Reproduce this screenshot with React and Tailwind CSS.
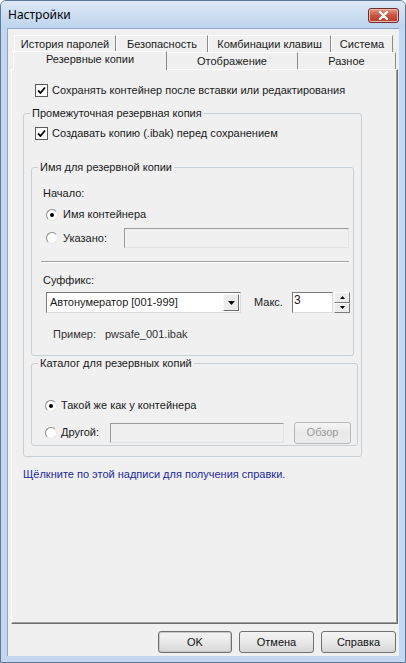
import React from 'react';

const font = "font-['Liberation_Sans',Arial,sans-serif]";

function Checkbox({ checked }) {
  return (
    <span className="flex items-center justify-center w-[13px] h-[13px] border border-[#5a5a5a] bg-white shrink-0">
      {checked && (
        <svg width="9" height="9" viewBox="0 0 9 9">
          <path d="M1 4.5 L3.5 7 L8 1.5" fill="none" stroke="#000" strokeWidth="1.8" />
        </svg>
      )}
    </span>
  );
}

function Radio({ checked }) {
  return (
    <span className="flex items-center justify-center w-[12px] h-[12px] rounded-full border border-[#8a8a8a] border-b-[#e8e8e8] border-r-[#e8e8e8] bg-white shrink-0">
      {checked && <span className="w-[4px] h-[4px] rounded-full bg-black" />}
    </span>
  );
}

function Group({ label, className, children }) {
  return (
    <fieldset className={'border border-[#c9d0d5] rounded-[3px] ' + className}>
      <legend className="ml-[6px] px-[2px] leading-[13px]">{label}</legend>
      {children}
    </fieldset>
  );
}

function Field({ className }) {
  return (
    <div className={'h-[20px] border border-[#9a9a9a] border-b-[#e3e3e3] border-r-[#e3e3e3] bg-[#f0f0f0] ' + className} />
  );
}

function Button({ children, isDefault, disabled, className }) {
  return (
    <button
      className={
        'h-[22px] rounded-[3px] border bg-linear-to-b from-[#f3f3f3] via-[#e9e9e9] to-[#d6d6d6] text-[11px] ' +
        (disabled ? 'border-[#b5b9bc] text-[#9a9a9a] from-[#f5f5f5] to-[#ececec] ' : 'border-[#707070] text-[#111] ') +
        (isDefault ? 'border-[#3d3d3d] shadow-[inset_0_0_0_1px_#c8c8c8] ' : '') +
        className
      }
    >
      {children}
    </button>
  );
}

const row1 = [
  ['История паролей', 'w-[102px]'],
  ['Безопасность', 'w-[92px]'],
  ['Комбинации клавиш', 'w-[123px]'],
  ['Система', 'w-[62px]'],
];

export default function App() {
  return (
    <div className={`w-[406px] h-[663px] flex flex-col bg-[#c3d7ee] border border-[#5d7a9c] rounded-t-[6px] overflow-hidden text-[11px] text-[#1a1a1a] ${font}`}>
      {/* title bar */}
      <div className="h-[27px] flex items-center justify-between pl-[7px] pr-[6px] bg-linear-to-b from-[#dbe7f5] to-[#bfd4ee]">
        <span className="font-['Noto_Sans',sans-serif] text-[12px] text-black">Настройки</span>
        <span className="flex items-center justify-center w-[31px] h-[15px] mt-[1px] rounded-[3px] border border-[#6e2b2b] bg-linear-to-b from-[#e39a8c] via-[#c9533f] to-[#b53a2a] shadow-[inset_0_0_0_1px_#f0b9ad]">
          <svg width="11" height="9" viewBox="0 0 11 9">
            <path d="M2 1 L9 8 M9 1 L2 8" stroke="#fff" strokeWidth="2.4" strokeLinecap="round" />
          </svg>
        </span>
      </div>

      {/* client area */}
      <div className="mx-[6px] flex-1 flex flex-col bg-[#f0f0f0] border-l border-t border-[#8ea7c4]">
        {/* tabs */}
        <div className="pt-[6px] pl-[6px] flex">
          {row1.map(([t, w]) => (
            <div key={t} className={'h-[17px] flex items-center justify-center border-l border-t border-white border-r border-r-[#8a8a8a] ' + w}>
              {t}
            </div>
          ))}
        </div>
        <div className="pl-[5px] flex items-end h-[17px]">
          <div className="h-[19px] w-[154px] flex items-center justify-center pb-[3px] border-l border-t border-white border-r border-r-[#8a8a8a] bg-[#f0f0f0] relative z-10 -mb-[1px]">
            Резервные копии
          </div>
          <div className="h-[17px] w-[131px] flex items-center justify-center border-t border-white border-r border-r-[#8a8a8a]">
            Отображение
          </div>
          <div className="h-[17px] w-[98px] flex items-center justify-center border-t border-white border-r border-r-[#8a8a8a]">
            Разное
          </div>
        </div>

        {/* panel */}
        <div className="ml-[3px] w-[387px] h-[555px] flex flex-col border-l border-t border-white border-r border-b border-r-[#6c6c6c] border-b-[#6c6c6c] shadow-[inset_-1px_-1px_0_#a0a0a0]">
          <div className="mt-[14px] ml-[23px] h-[13px] flex items-center gap-[4px]">
            <Checkbox checked />
            <span>Сохранять контейнер после вставки или редактирования</span>
          </div>

          <Group label="Промежуточная резервная копия" className="mt-[10px] ml-[11px] w-[339px] h-[350px] flex flex-col">
            <div className="mt-[7px] ml-[11px] h-[13px] flex items-center gap-[4px]">
              <Checkbox checked />
              <span>Создавать копию (.ibak) перед сохранением</span>
            </div>

            <Group label="Имя для резервной копии" className="mt-[21px] ml-[7px] w-[323px] h-[195px] flex flex-col">
              <div className="mt-[13px] ml-[11px] leading-[13px]">Начало:</div>
              <div className="mt-[8px] ml-[14px] h-[13px] flex items-center gap-[5px]">
                <Radio checked />
                <span>Имя контейнера</span>
              </div>
              <div className="mt-[7px] ml-[14px] h-[20px] flex items-center">
                <Radio />
                <span className="ml-[5px] w-[61px]">Указано:</span>
                <Field className="w-[225px]" />
              </div>
              <div className="mt-[13px] ml-[9px] w-[308px] h-[2px] border-t border-[#a0a0a0] border-b border-b-white" />
              <div className="mt-[11px] ml-[11px] leading-[13px]">Суффикс:</div>
              <div className="mt-[5px] ml-[14px] flex items-center">
                <div className="w-[195px] h-[21px] flex items-center justify-between bg-white border border-[#7a7a7a] border-b-[#dcdcdc] border-r-[#dcdcdc] pl-[3px] pr-[1px]">
                  <span>Автонумератор [001-999]</span>
                  <span className="w-[16px] h-[17px] flex items-center justify-center border border-[#f8f8f8] border-b-[#6c6c6c] border-r-[#6c6c6c] bg-[#ececec]">
                    <svg width="7" height="4" viewBox="0 0 7 4"><path d="M0 0 H7 L3.5 4 Z" fill="#000" /></svg>
                  </span>
                </div>
                <span className="ml-[13px] w-[38px]">Макс.</span>
                <div className="w-[41px] h-[21px] -mt-[1px] bg-white border border-[#7a7a7a] border-b-[#dcdcdc] border-r-[#dcdcdc] pl-[1px] leading-[15px] text-[12px]">3</div>
                <div className="ml-[1px] w-[16px] h-[21px] flex flex-col">
                  <span className="flex-1 flex items-center justify-center border border-[#fbfbfb] border-b-[#7a7a7a] border-r-[#7a7a7a] bg-[#ececec]">
                    <svg width="5" height="3" viewBox="0 0 5 3"><path d="M0 3 H5 L2.5 0 Z" fill="#000" /></svg>
                  </span>
                  <span className="flex-1 flex items-center justify-center border border-[#fbfbfb] border-b-[#7a7a7a] border-r-[#7a7a7a] bg-[#ececec]">
                    <svg width="5" height="3" viewBox="0 0 5 3"><path d="M0 0 H5 L2.5 3 Z" fill="#000" /></svg>
                  </span>
                </div>
              </div>
              <div className="mt-[15px] ml-[21px] flex leading-[13px] text-[#333]">
                <span className="w-[52px]">Пример:</span>
                <span>pwsafe_001.ibak</span>
              </div>
            </Group>

            <Group label="Каталог для резервных копий" className="mt-[1px] ml-[7px] w-[327px] h-[89px] flex flex-col">
              <div className="mt-[29px] ml-[13px] h-[13px] flex items-center gap-[4px]">
                <Radio checked />
                <span>Такой же как у контейнера</span>
              </div>
              <div className="mt-[10px] ml-[13px] h-[21px] flex items-center">
                <Radio />
                <span className="ml-[4px] w-[49px]">Другой:</span>
                <Field className="w-[174px]" />
                <Button disabled className="ml-[10px] w-[57px] h-[21px]">Обзор</Button>
              </div>
            </Group>
          </Group>

          <div className="mt-[11px] ml-[11px] leading-[13px] text-[#1a2a9c]">
            Щёлкните по этой надписи для получения справки.
          </div>
        </div>

        {/* buttons */}
        <div className="mt-[7px] flex justify-end gap-[7px] pr-[3px]">
          <Button isDefault className="w-[74px]">OK</Button>
          <Button className="w-[75px]">Отмена</Button>
          <Button className="w-[75px]">Справка</Button>
        </div>
      </div>
      <div className="h-[6px]" />
    </div>
  );
}
